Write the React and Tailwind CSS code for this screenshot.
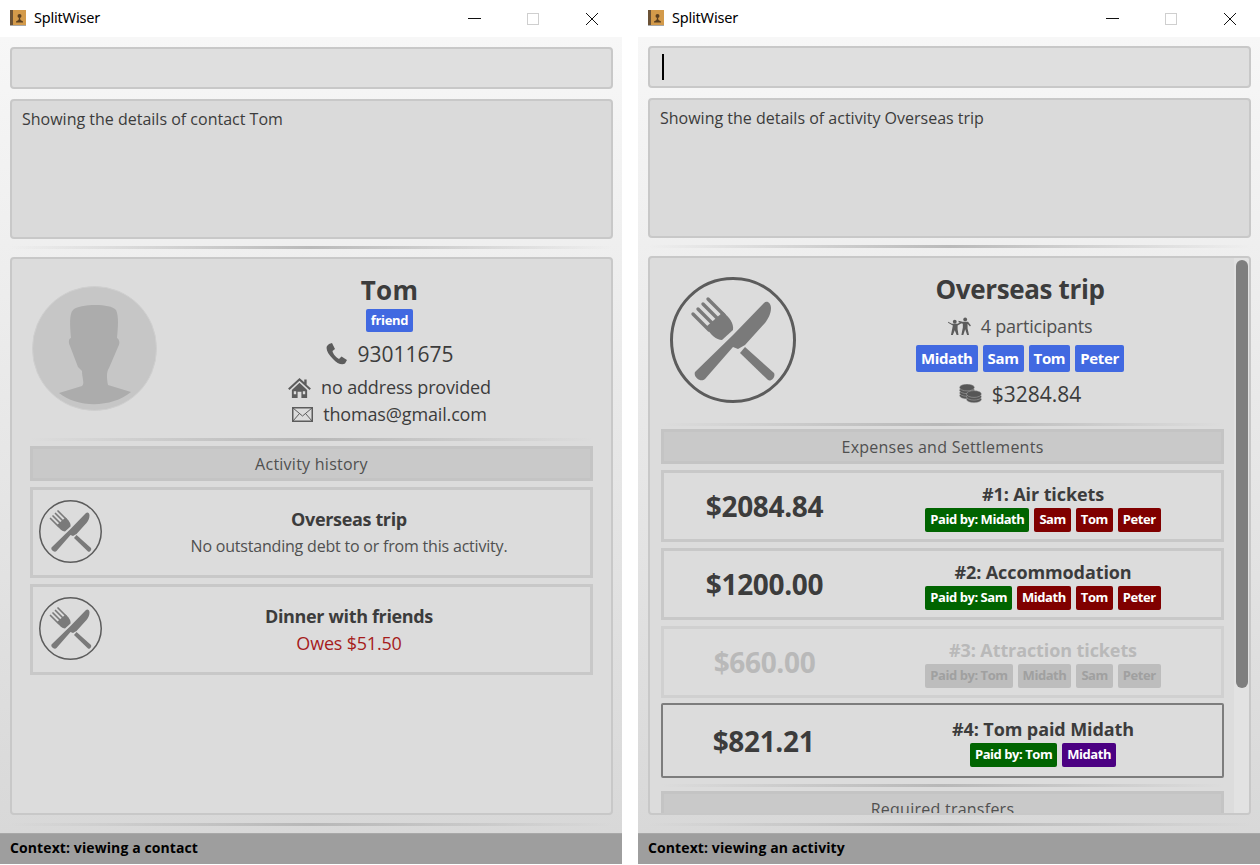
import React from "react";

const Knife = ({ className }) => (
  <svg viewBox="0 0 126 126" className={className}>
    <circle cx="63" cy="63" r="61.5" fill="none" stroke="#5c5c5c" strokeWidth="3" />
    <g fill="#7a7a7a">
      <path d="M23 37 L39 53 M28 32 L44 48 M33 27 L49 43 M38 22 L54 38" stroke="#7a7a7a" strokeWidth="3.4" strokeLinecap="round" fill="none" />
      <path d="M36 50 L53 35 C59 40 64 46 63 53 L52 63 C46 63 41 58 36 50 Z" />
      <path d="M25 95 L63 58 L94 26 C97 23 101 26 101 31 C101 37 98 42 95 46 L75 68 L68 72 L63 70 L35 102 C31 106 23 100 25 95 Z" />
      <path d="M70 76 L75 70 L104 96 C106 100 101 105 98 103 Z" />
    </g>
  </svg>
);

const Avatar = () => (
  <svg viewBox="0 0 125 125" className="w-[125px] h-[125px] shrink-0">
    <circle cx="62.5" cy="62.5" r="62" fill="#c6c6c6" stroke="#cfcfcf" strokeWidth="1" />
    <path d="M27 107 L50 100 C53 98 50 92 50 85 L46 81 L38 60 C36 56 37 52 39 52 C38 40 37 28 41 24 C47 18 78 17 84 24 C87 30 86 42 85 52 C88 54 88 58 86 61 L77 82 C74 86 75 94 76 99 L99 106 C80 122 45 122 27 107 Z" fill="#acacac" />
  </svg>
);

const Phone = () => (
  <svg viewBox="0 0 22 22" className="w-[22px] h-[22px]">
    <path d="M4 1 L7 0 L10 6 L7.5 8 C8 11 11 14.5 14 16 L16.5 13.5 L22 17 L20 20.5 C17 22.5 12 20.5 8 16 C3 11 0.5 6 2 3 Z" fill="#5c5c5c" />
  </svg>
);

const Home = () => (
  <svg viewBox="0 0 24 21" className="w-[23px] h-[20px]">
    <path d="M0 11 L12 0 L17 4.5 L17 1.5 L19.5 1.5 L19.5 7 L24 11 L22.5 12.5 L12 3 L1.5 12.5 Z" fill="#5c5c5c" />
    <path d="M4 12.5 L12 5 L20 12.5 L20 21 L14 21 L14 14.5 L10 14.5 L10 21 L4 21 Z M6 14 L6 17 L8.5 17 L8.5 14 Z M15.5 14 L15.5 17 L18 17 L18 14 Z" fillRule="evenodd" fill="#5c5c5c" />
  </svg>
);

const Mail = () => (
  <svg viewBox="0 0 21 15" className="w-[21px] h-[15px]">
    <rect x="0.75" y="0.75" width="19.5" height="13.5" fill="none" stroke="#5c5c5c" strokeWidth="1.5" />
    <path d="M1 1 L10.5 9 L20 1 M1 14 L7.5 6.5 M20 14 L13.5 6.5" fill="none" stroke="#5c5c5c" strokeWidth="1" />
  </svg>
);

const People = () => (
  <svg viewBox="0 0 24 20" className="w-[23px] h-[19px]">
    <g fill="#5c5c5c">
      <circle cx="7" cy="5" r="2" />
      <circle cx="18" cy="2.5" r="2" />
      <path d="M0 5 L4 7 L10 7 L14 5 L15 6 L10 9 L10 13 L11 19 L9 19 L7 14 L5 19 L3 19 L5 9 L0 6 Z" />
      <path d="M11 4 L15 5 L21 5 L24 9 L23 10 L20.5 7 L20.5 12 L22 19 L20 19 L18 13 L16 19 L14 19 L15.5 11 L15.5 7 L11 5.5 Z" />
    </g>
  </svg>
);

const Stack = ({ cx, top, n }) => (
  <g>
    {Array.from({ length: n }).reverse().map((_, i) => (
      <ellipse key={i} cx={cx} cy={top + (n - 1 - i) * 2.7} rx="7.5" ry="3.4" fill="#565656" stroke="#bdbdbd" strokeWidth="0.45" />
    ))}
  </g>
);

const Coins = () => (
  <svg viewBox="0 0 23 20" className="w-[23px] h-[20px]">
    <Stack cx={8} top={3.5} n={4} />
    <Stack cx={15} top={10} n={3} />
  </svg>
);

const Tag = ({ c = "bg-[#4169e1] text-white", children }) => (
  <span className={`${c} font-bold rounded-[2px] px-[5px] flex items-center justify-center`}>{children}</span>
);

const Splitter = ({ className = "" }) => (
  <div className={`h-[3px] bg-[linear-gradient(90deg,transparent,#b4b4b4_50%,transparent)] opacity-90 ${className}`} />
);

const AppIcon = () => (
  <svg viewBox="0 0 16 16" className="w-[16px] h-[16px]">
    <rect x="0" y="0" width="16" height="16" fill="#d39a4a" />
    <rect x="0" y="0" width="3" height="16" fill="#6b5236" />
    <circle cx="9.5" cy="6" r="2" fill="#5a3f20" />
    <path d="M9 8 L10 8 L10.5 10 L13 11.5 L13 12.5 L6 12.5 L6 11.5 L8.5 10 Z" fill="#5a3f20" />
    <rect x="0" y="15" width="16" height="1" fill="#a9a9a9" />
  </svg>
);

const Window = ({ boxShift, caret, result, status, children }) => (
  <div className="w-[622px] h-[865px] flex flex-col bg-white text-[#3c3c3c]">
    <div className="h-[37px] shrink-0 bg-white flex items-center pl-[10px] pb-[2px]">
      <AppIcon />
      <span className="ml-[8px] text-[14.5px] text-black tracking-[-0.2px] font-['Noto_Sans',sans-serif]">SplitWiser</span>
      <div className="ml-auto flex items-center h-full pt-[2px]">
        <svg width="14" height="14" viewBox="0 0 14 14" className="mr-[45px]"><path d="M1 6.5 H14" stroke="#111" strokeWidth="1" /></svg>
        <svg width="14" height="14" viewBox="0 0 14 14" className="mr-[45px]"><rect x="1.5" y="1.5" width="11" height="11" fill="none" stroke="#cfcfcf" /></svg>
        <svg width="14" height="14" viewBox="0 0 14 14" className="mr-[23px]"><path d="M1 1 L13 13 M13 1 L1 13" stroke="#111" strokeWidth="1" /></svg>
      </div>
    </div>
    <div className="flex-1 flex flex-col bg-[linear-gradient(#f7f7f7,#d8d8d8)] pl-[10px] pr-[9px] min-h-0">
      <div className={`${boxShift} h-[42px] shrink-0 rounded-[4px] border-2 border-[#c8c8c8] bg-[#dfdfdf] flex items-center pl-[12px]`}>
        {caret && <div className="w-[1.5px] h-[26px] bg-black" />}
      </div>
      <div className="mt-[10px] h-[140px] shrink-0 rounded-[4px] border-2 border-[#c8c8c8] bg-[#dadada] pl-[10px] pt-[6px] text-[16px] leading-[24px] tracking-normal">
        {result}
      </div>
      <Splitter className="mt-[7px] mb-[8px] shrink-0" />
      {children}
      <Splitter className="mt-[8px] mb-[7px] shrink-0" />
    </div>
    <div className="h-[31px] shrink-0 bg-[#9e9e9e] border-t border-[#a8a8a8] flex items-center pl-[10px] pb-[3px] text-[14px] font-bold text-black tracking-[0.1px]">{status}</div>
    <div className="h-[1px] shrink-0 bg-white" />
  </div>
);

const Header = ({ children }) => (
  <div className="h-[35px] shrink-0 flex items-center justify-center bg-[#c9c9c9] border-[3px] border-[#c4c4c4] text-[16px] text-[#505050] tracking-[0.25px]">{children}</div>
);

const ActivityCard = ({ title, sub, subClass }) => (
  <div className="h-[91px] shrink-0 mt-[6px] border-[3px] border-[#c8c8c8] bg-[#dcdcdc] flex items-center pl-[6px] pb-[2px]">
    <Knife className="w-[63px] h-[63px] shrink-0" />
    <div className="flex-1 flex flex-col items-center pl-[6px] pt-[1px]">
      <span className="text-[18px] leading-[26px] font-bold text-[#3c3c3c]">{title}</span>
      <span className={`leading-[26px] mt-[1px] ${subClass}`}>{sub}</span>
    </div>
  </div>
);

const ExpenseCard = ({ amount, title, tags, className = "", h = "h-[72px]", border = "border-[3px] border-[#c8c8c8]", amountColor = "text-[#3c3c3c]", titleColor = "text-[#3c3c3c]" }) => (
  <div className={`${h} shrink-0 mt-[6px] ${border} bg-[#dcdcdc] ${className}`}>
    <div className="h-full flex items-center">
      <div className={`w-[201px] shrink-0 text-center font-bold text-[28px] ${amountColor}`}>{amount}</div>
      <div className="flex-1 flex flex-col items-center pt-[3px]">
        <span className={`text-[18px] leading-[22px] font-bold tracking-[-0.1px] ${titleColor}`}>{title}</span>
        <div className="flex gap-[5px] h-[24px] mt-[3px] text-[13px] tracking-[-0.45px]">{tags}</div>
      </div>
    </div>
  </div>
);

const G = "bg-[#006400] text-white", R = "bg-[#800000] text-white", P = "bg-[#4b0082] text-white", M = "bg-[#bdbdbd] text-[#a0a0a0]";

export default function App() {
  return (
    <div className="w-[1260px] h-[865px] overflow-hidden flex gap-[16px] bg-white font-['Open_Sans',sans-serif] tracking-[-0.35px]">
      <Window boxShift="mt-[10px]" result="Showing the details of contact Tom" status="Context: viewing a contact">
        <div className="flex-1 min-h-0 rounded-[4px] border-2 border-[#c8c8c8] bg-[#dcdcdc] px-[18px] flex flex-col">
          <div className="flex h-[179px] shrink-0">
            <div className="pt-[27px] pl-[2px]"><Avatar /></div>
            <div className="flex-1 flex flex-col items-center pt-[12px] pl-[29px]">
              <span className="text-[26px] leading-[38px] font-bold tracking-[0.3px]">Tom</span>
              <div className="flex h-[23px] text-[13px]"><Tag>friend</Tag></div>
              <div className="flex items-center gap-[10px] text-[21px] leading-[30px] mt-[7px] tracking-normal"><Phone /><span>93011675</span></div>
              <div className="flex items-center gap-[10px] text-[18px] leading-[27px] mt-[5px] tracking-[-0.15px]"><Home /><span>no address provided</span></div>
              <div className="flex items-center gap-[10px] text-[18px] leading-[27px] tracking-[-0.15px]"><Mail /><span>thomas@gmail.com</span></div>
            </div>
          </div>
          <Splitter className="mb-[5px] shrink-0" />
          <Header>Activity history</Header>
          <ActivityCard title="Overseas trip" sub="No outstanding debt to or from this activity." subClass="text-[16px] text-[#505050] tracking-[-0.2px]" />
          <ActivityCard title="Dinner with friends" sub="Owes $51.50" subClass="text-[18px] text-[#a61c1c] tracking-[-0.2px]" />
        </div>
      </Window>
      <Window boxShift="mt-[9px]" caret result="Showing the details of activity Overseas trip" status="Context: viewing an activity">
        <div className="flex-1 min-h-0 rounded-[4px] border-2 border-[#c8c8c8] bg-[#dcdcdc] flex overflow-hidden">
          <div className="flex-1 min-w-0 pl-[11px] pr-[10px] flex flex-col">
            <div className="flex h-[165px] shrink-0">
              <div className="pt-[19px] pl-[9px]"><Knife className="w-[126px] h-[126px]" /></div>
              <div className="flex-1 flex flex-col items-center pt-[12px] pl-[20px]">
                <span className="text-[26px] leading-[38px] font-bold">Overseas trip</span>
                <div className="flex items-center gap-[10px] text-[18px] leading-[27px] mt-[5px] text-[#505050] tracking-[-0.2px]"><People /><span>4 participants</span></div>
                <div className="flex gap-[5px] h-[27px] text-[15px] mt-[5px]">
                  <Tag>Midath</Tag><Tag>Sam</Tag><Tag>Tom</Tag><Tag>Peter</Tag>
                </div>
                <div className="flex items-center gap-[10px] text-[21px] leading-[30px] mt-[7px] tracking-normal"><Coins /><span>$3284.84</span></div>
              </div>
            </div>
            <Splitter className="mb-[3px] shrink-0" />
            <Header>Expenses and Settlements</Header>
            <ExpenseCard amount="$2084.84" title="#1: Air tickets" tags={<><Tag c={G}>Paid by: Midath</Tag><Tag c={R}>Sam</Tag><Tag c={R}>Tom</Tag><Tag c={R}>Peter</Tag></>} />
            <ExpenseCard amount="$1200.00" title="#2: Accommodation" tags={<><Tag c={G}>Paid by: Sam</Tag><Tag c={R}>Midath</Tag><Tag c={R}>Tom</Tag><Tag c={R}>Peter</Tag></>} />
            <ExpenseCard amount="$660.00" title="#3: Attraction tickets" amountColor="text-[#b9b9b9]" titleColor="text-[#b9b9b9]" border="border-[3px] border-[#d0d0d0]" tags={<><Tag c={M}>Paid by: Tom</Tag><Tag c={M}>Midath</Tag><Tag c={M}>Sam</Tag><Tag c={M}>Peter</Tag></>} />
            <ExpenseCard amount="$821.21" title="#4: Tom paid Midath" h="h-[75px]" className="rounded-[2px] !mt-[5px]" border="border-2 border-[#7d7d7d]" tags={<><Tag c={G}>Paid by: Tom</Tag><Tag c={P}>Midath</Tag></>} />
            <Splitter className="mt-[6px] mb-[4px] shrink-0" />
            <Header>Required transfers</Header>
          </div>
          <div className="w-[15px] shrink-0 bg-[#e2e2e2] pl-[2px] pr-[1px] pt-[2px] h-full">
            <div className="h-[428px] rounded-[6px] bg-[#7f7f7f]" />
          </div>
        </div>
      </Window>
    </div>
  );
}
